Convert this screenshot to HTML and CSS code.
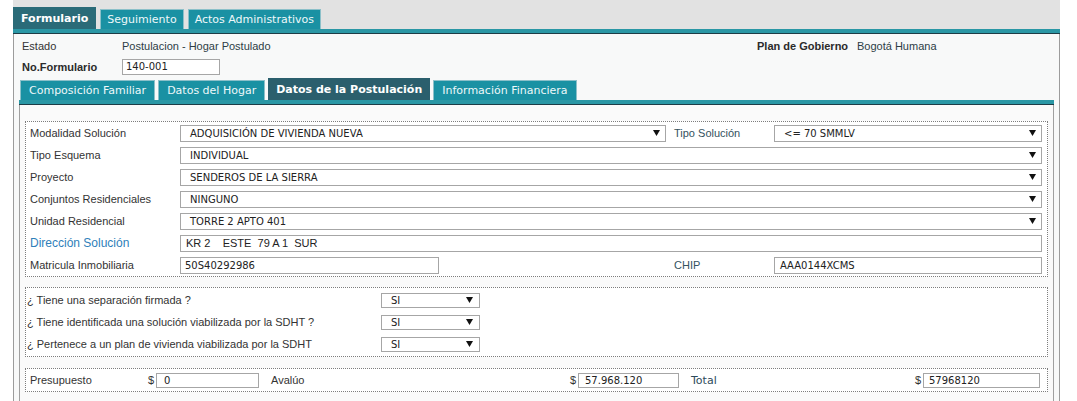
FILE: index.html
```html
<!DOCTYPE html>
<html lang="es">
<head>
<meta charset="utf-8">
<title>Formulario</title>
<link rel="stylesheet" href="styles.css">
</head>
<body>
<div class="page">
  <div class="topband">
    <div class="tabs main-tabs">
      <div class="tab active">Formulario</div>
      <div class="tab">Seguimiento</div>
      <div class="tab">Actos Administrativos</div>
    </div>
  </div>
  <div class="bar"></div>
  <div class="panel">
    <div class="head r1">
      <span class="hl">Estado</span><span class="hv">Postulacion - Hogar Postulado</span>
      <span class="hl b">Plan de Gobierno</span><span class="hv">Bogotá Humana</span>
    </div>
    <div class="head r2">
      <span class="hl b">No.Formulario</span><span class="hv"><span class="inp form-no">140-001</span></span>
    </div>
    <div class="tabs sub-tabs">
      <div class="tab">Composición Familiar</div>
      <div class="tab">Datos del Hogar</div>
      <div class="tab active">Datos de la Postulación</div>
      <div class="tab">Información Financiera</div>
    </div>
    <div class="bar"></div>
    <div class="inner">
      <div class="fs fs1">
        <div class="row">
          <span class="lbl">Modalidad Solución</span>
          <div class="sel">ADQUISICIÓN DE VIVIENDA NUEVA<svg class="arr" viewBox="0 0 7 6" width="7" height="6"><path d="M0 0H7L3.5 6Z"/></svg></div>
          <span class="lbl alt">Tipo Solución</span>
          <div class="sel">&lt;= 70 SMMLV<svg class="arr" viewBox="0 0 7 6" width="7" height="6"><path d="M0 0H7L3.5 6Z"/></svg></div>
        </div>
        <div class="row">
          <span class="lbl">Tipo Esquema</span>
          <div class="sel wide">INDIVIDUAL<svg class="arr" viewBox="0 0 7 6" width="7" height="6"><path d="M0 0H7L3.5 6Z"/></svg></div>
        </div>
        <div class="row">
          <span class="lbl">Proyecto</span>
          <div class="sel wide">SENDEROS DE LA SIERRA<svg class="arr" viewBox="0 0 7 6" width="7" height="6"><path d="M0 0H7L3.5 6Z"/></svg></div>
        </div>
        <div class="row">
          <span class="lbl">Conjuntos Residenciales</span>
          <div class="sel wide">NINGUNO<svg class="arr" viewBox="0 0 7 6" width="7" height="6"><path d="M0 0H7L3.5 6Z"/></svg></div>
        </div>
        <div class="row">
          <span class="lbl">Unidad Residencial</span>
          <div class="sel wide">TORRE 2 APTO 401<svg class="arr" viewBox="0 0 7 6" width="7" height="6"><path d="M0 0H7L3.5 6Z"/></svg></div>
        </div>
        <div class="row">
          <span class="lbl link">Dirección Solución</span>
          <div class="inp wide addr">KR 2    ESTE  79 A 1  SUR</div>
        </div>
        <div class="row">
          <span class="lbl">Matricula Inmobiliaria</span>
          <div class="inp mat">50S40292986</div>
          <span class="lbl alt">CHIP</span>
          <div class="inp">AAA0144XCMS</div>
        </div>
      </div>

      <div class="fs fs2">
        <div class="qrow">
          <span class="q">¿ Tiene una separación firmada ?</span>
          <div class="sel small">SI<svg class="arr" viewBox="0 0 7 6" width="7" height="6"><path d="M0 0H7L3.5 6Z"/></svg></div>
        </div>
        <div class="qrow">
          <span class="q">¿ Tiene identificada una solución viabilizada por la SDHT ?</span>
          <div class="sel small">SI<svg class="arr" viewBox="0 0 7 6" width="7" height="6"><path d="M0 0H7L3.5 6Z"/></svg></div>
        </div>
        <div class="qrow">
          <span class="q">¿ Pertenece a un plan de vivienda viabilizada por la SDHT</span>
          <div class="sel small">SI<svg class="arr" viewBox="0 0 7 6" width="7" height="6"><path d="M0 0H7L3.5 6Z"/></svg></div>
        </div>
      </div>

      <div class="fs fs3">
        <span class="m-lbl presu">Presupuesto</span>
        <span class="cur">$</span>
        <div class="inp money m1">0</div>
        <span class="m-lbl aval">Avalúo</span>
        <span class="cur">$</span>
        <div class="inp money m2">57.968.120</div>
        <span class="m-lbl total">Total</span>
        <span class="cur">$</span>
        <div class="inp money m3">57968120</div>
      </div>
    </div>
  </div>
</div>
</body>
</html>
```

FILE: styles.css
```css
* { box-sizing: border-box; }
html, body { margin: 0; padding: 0; background: #fff; }
body {
  font-family: "Liberation Sans", Arial, sans-serif;
  font-size: 11px;
  color: #333;
}
.page { margin-left: 13px; width: 1047px; }

.topband {
  background: #e2e2e2;
  height: 29px;
  display: flex;
  align-items: flex-end;
}
.tabs { display: flex; align-items: flex-end; gap: 4px; }
.tab {
  font-family: "DejaVu Sans", Verdana, sans-serif;
  font-size: 11px;
  color: #eef8fa;
  background: #1a91a3;
  height: 20px;
  line-height: 19px;
  padding: 0 6px;
  border: 1px solid #8cc0c9;
  border-bottom: 0;
  white-space: nowrap;
}
.tab.active {
  background: #2a6b78;
  border-color: #2a6b78;
  color: #fff;
  font-weight: bold;
  height: 22px;
  line-height: 21px;
  padding: 0 7px;
}
.sub-tabs { gap: 3px; height: 22px; padding-left: 1px; }
.sub-tabs .tab { padding: 0 8px; }
.sub-tabs .tab.active { background: #2b5f6d; border-color: #2b5f6d; padding: 0 7px; }

.bar {
  height: 5px;
  background: #2a97a5;
  border-bottom: 1px solid #1d3c46;
}

.panel {
  background: #f8f9f9;
  border-left: 1px solid #9c9c9c;
  border-right: 1px solid #9c9c9c;
  padding: 2px 5px 0;
}
.head {
  display: grid;
  grid-template-columns: 100px 635px 100px 1fr;
  align-items: center;
  padding-left: 3px;
}
.head.r1 { height: 20px; }
.head.r2 { height: 22px; }
.hl { color: #333; }
.hl.b { font-weight: bold; color: #2b2b2b; }
.hv { color: #2d3d46; }

.inp {
  height: 17px;
  border: 1px solid #a6a6a6;
  background: #fff;
  font-family: "DejaVu Sans", Verdana, sans-serif;
  font-size: 10px;
  color: #222;
  line-height: 15px;
  padding-left: 5px;
  white-space: pre;
}
.form-no { display: block; width: 98px; height: 16px; line-height: 14px; padding-left: 3px; }

.inner {
  background: #fafafa;
  border-left: 1px solid #a0a0a0;
  border-right: 1px solid #a0a0a0;
  padding: 16px 5px 20px;
}

.fs {
  border: 1px dotted #7d7d7d;
  background: #fff;
}
.fs1 { padding: 0 5px 0 4px; }
.row {
  display: grid;
  grid-template-columns: 150px 486px 108px 1fr;
  align-items: center;
  height: 22px;
}
.row .wide { grid-column: 2 / 5; }
.lbl { color: #333; }
.lbl.alt { color: #34525e; padding-left: 8px; }
.lbl.link { color: #2f7fba; font-size: 12px; }

.sel {
  display: flex;
  align-items: center;
  justify-content: space-between;
  height: 17px;
  border: 1px solid #a6a6a6;
  background: #fff;
  font-family: "DejaVu Sans", Verdana, sans-serif;
  font-size: 10px;
  color: #222;
  padding: 0 5px 0 9px;
  white-space: pre;
}
.arr { display: block; fill: #111; }
.addr { font-family: "Liberation Sans", Arial, sans-serif; font-size: 11px; }
.mat { width: 259px; padding-left: 4px; }

.fs2 { margin-top: 10px; padding: 1px 0 1px 1px; }
.qrow {
  display: grid;
  grid-template-columns: 354px 99px;
  align-items: center;
  height: 22px;
}
.sel.small { height: 15px; padding-right: 6px; }

.fs3 {
  margin-top: 11px;
  height: 24px;
  display: flex;
  align-items: center;
  padding-left: 4px;
}
.m-lbl { flex: none; }
.presu { width: 118px; }
.aval { width: 311px; padding-left: 12px; }
.total { width: 236px; padding-left: 12px; font-family: "DejaVu Sans", Verdana, sans-serif; color: #2d4b5a; }
.cur { width: 8px; flex: none; }
.money { height: 15px; line-height: 13px; flex: none; }
.m1 { width: 103px; padding-left: 7px; }
.m2 { width: 101px; padding-left: 6px; }
.m3 { width: 117px; padding-left: 5px; }
```
